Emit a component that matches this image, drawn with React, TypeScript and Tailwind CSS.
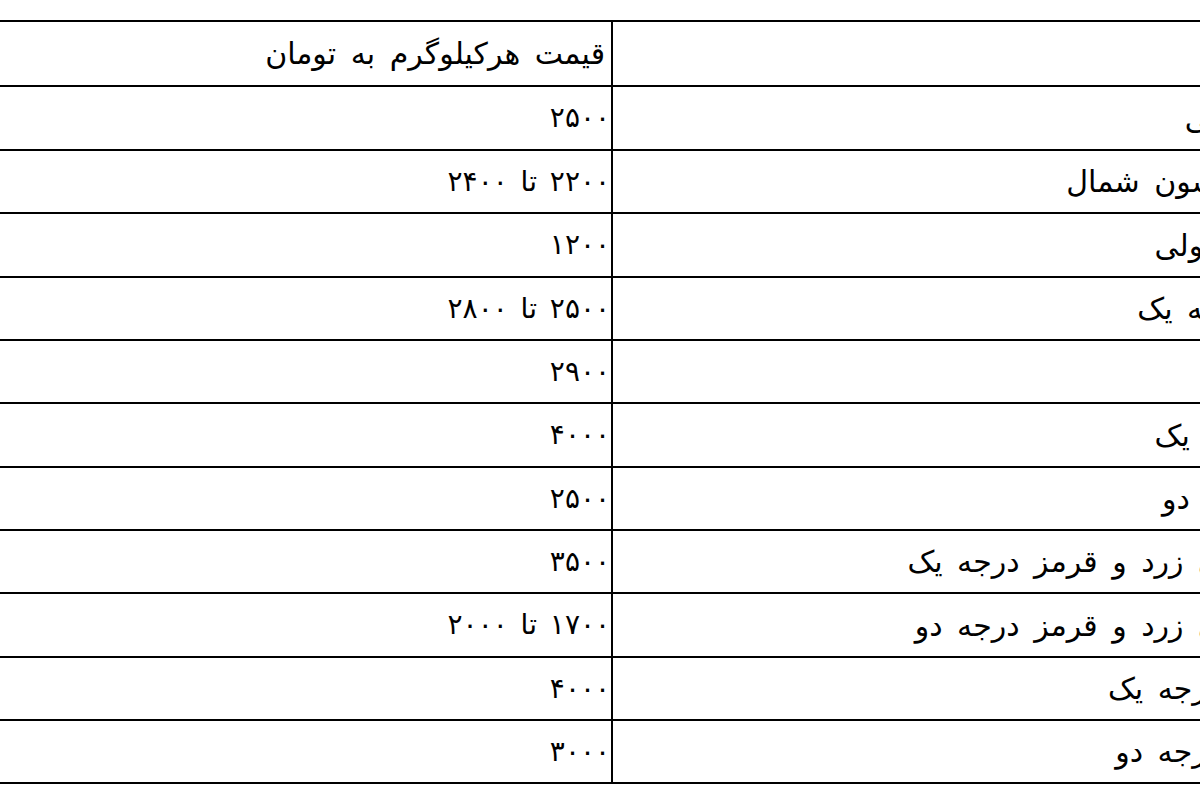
const rows: { name: string; price: string; h: string }[] = [
  { name: "پرتقال خونی", price: "۲۵۰۰", h: "h-[64px]" },
  { name: "پرتقال تامسون شمال", price: "۲۲۰۰ تا ۲۴۰۰", h: "h-[63px]" },
  { name: "پرتقال معمولی", price: "۱۲۰۰", h: "h-[64px]" },
  { name: "نارنگی درجه یک", price: "۲۵۰۰ تا ۲۸۰۰", h: "h-[63px]" },
  { name: "موز", price: "۲۹۰۰", h: "h-[63px]" },
  { name: "سیب قرمز یک", price: "۴۰۰۰", h: "h-[64px]" },
  { name: "سیب قرمز دو", price: "۲۵۰۰", h: "h-[63px]" },
  { name: "سیب لبنانی زرد و قرمز درجه یک", price: "۳۵۰۰", h: "h-[63px]" },
  { name: "سیب لبنانی زرد و قرمز درجه دو", price: "۱۷۰۰ تا ۲۰۰۰", h: "h-[64px]" },
  { name: "هندوانه‌ی درجه یک", price: "۴۰۰۰", h: "h-[63px]" },
  { name: "هندوانه‌ی درجه دو", price: "۳۰۰۰", h: "h-[63px]" },
];

function Row({ name, price, h }: { name: string; price: string; h: string }) {
  return (
    <div className={`flex ${h} border-b-2 border-black`}>
      <div dir="rtl" className="flex w-[613px] shrink-0 items-center border-r-2 border-black pr-[1px] text-[28px] [word-spacing:4px]">
        <span>{price}</span>
      </div>
      <div dir="rtl" className="flex w-[733px] shrink-0 items-center text-[30px] [word-spacing:5px]">
        <span className="whitespace-nowrap">{name}</span>
      </div>
    </div>
  );
}

export default function App() {
  return (
    <div className="h-[800px] w-[1200px] overflow-hidden bg-white text-black [font-family:'DejaVu_Sans',sans-serif]">
      <div className="mt-[20px] w-[1346px] border-t-2 border-black">
        {/* Header */}
        <div className="flex h-[65px] border-b-2 border-black">
          <div dir="rtl" className="flex w-[613px] shrink-0 items-center border-r-2 border-black pr-[6px] text-[30px] [word-spacing:5px]">
            <span>قیمت هرکیلوگرم به تومان</span>
          </div>
          <div dir="rtl" className="flex w-[733px] shrink-0 items-center text-[30px] [word-spacing:5px]">
            <span>نوع میوه</span>
          </div>
        </div>
        {rows.map((r, i) => (
          <Row key={i} {...r} />
        ))}
      </div>
    </div>
  );
}
